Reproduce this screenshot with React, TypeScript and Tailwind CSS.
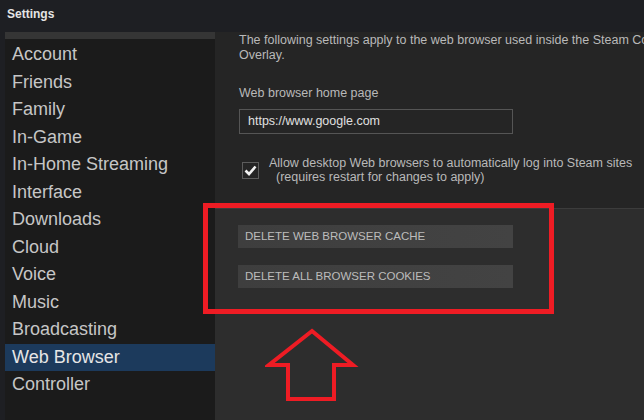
import React from "react";

const items = [
  "Account",
  "Friends",
  "Family",
  "In-Game",
  "In-Home Streaming",
  "Interface",
  "Downloads",
  "Cloud",
  "Voice",
  "Music",
  "Broadcasting",
  "Web Browser",
  "Controller",
];

export default function App() {
  return (
    <div
      className="relative h-[420px] w-[644px] overflow-hidden bg-[#1e1f23] text-[#c6c6c6]"
      style={{ fontFamily: '"Liberation Sans", Arial, sans-serif' }}
    >
      <div className="flex h-[32px] items-start px-[7px] pt-[5px] text-[12px] font-bold text-[#e4e4e4]">
        Settings
      </div>

      <div className="flex h-[388px]">
        <div className="ml-[5px] w-[210px] shrink-0 bg-[#1b1b1b]">
          <div className="h-[7px] bg-[#353535]" />
          <ul className="pt-[2px]">
            {items.map((it) => (
              <li
                key={it}
                className={
                  "h-[27.5px] pl-[7px] text-[18px] leading-[27.5px] " +
                  (it === "Web Browser" ? "bg-[#1c3a5c] text-[#e6e6e6]" : "")
                }
              >
                {it}
              </li>
            ))}
          </ul>
        </div>

        <div className="flex min-w-0 flex-1 flex-col overflow-hidden bg-[#2d2d2d]">
          <div className="h-[177px] border-b border-[#3c3c3c] bg-[#252525] pl-[24px] pt-[1px] text-[12.5px] text-[#b9b9b9]">
            <p className="whitespace-nowrap leading-[15px]">
              The following settings apply to the web browser used inside the Steam Community
              <br />
              Overlay.
            </p>
            <p className="mt-[23px] leading-[15px]">Web browser home page</p>
            <div className="mt-[8px] flex h-[25px] w-[274px] items-center border border-[#555] bg-[#252525] pl-[8px] text-[12.5px] text-[#e0e0e0]">
              https://www.google.com
            </div>
            <div className="mt-[22px] flex items-start whitespace-nowrap">
              <div className="mt-[6px] ml-[3px] flex h-[17px] w-[17px] shrink-0 items-center justify-center border border-[#5c5c5c] bg-[#252525]">
                <svg width="13" height="11" viewBox="0 0 13 11">
                  <path d="M1.5 5.5 L5 9 L11.5 1.5" fill="none" stroke="#f2f2f2" strokeWidth="2.6" />
                </svg>
              </div>
              <div className="ml-[10px] leading-[14px]">
                <div>Allow desktop Web browsers to automatically log into Steam sites</div>
                <div className="pl-[7px]">(requires restart for changes to apply)</div>
              </div>
            </div>
          </div>

          <div className="pl-[23px] pt-[16px] text-[11.5px] text-[#bcbcbc]">
            <button className="flex h-[23px] w-[275px] items-center bg-gradient-to-r from-[#3e3e3e] to-[#434343] pl-[7px] uppercase">
              Delete web browser cache
            </button>
            <button className="mt-[17px] flex h-[23px] w-[275px] items-center bg-gradient-to-r from-[#3e3e3e] to-[#434343] pl-[7px] uppercase">
              Delete all browser cookies
            </button>
          </div>
        </div>
      </div>

      <div className="absolute left-[203px] top-[203px] h-[111px] w-[351px] border-[5px] border-[#ee1c24]" />

      <svg className="absolute left-[265px] top-[327px]" width="94" height="76" viewBox="0 0 94 76">
        <path
          d="M47 4 L88 38 L69 38 L69 72 L23 72 L23 38 L4 38 Z"
          fill="none"
          stroke="#ee1c24"
          strokeWidth="4"
          strokeLinejoin="miter"
        />
      </svg>
    </div>
  );
}
